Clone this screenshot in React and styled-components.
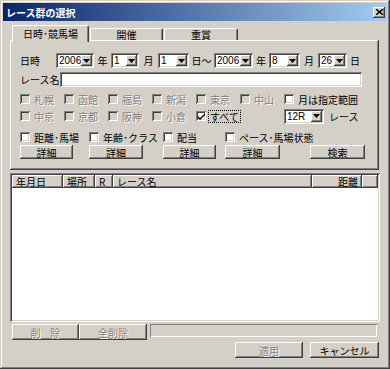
import React from 'react'
import styled, { createGlobalStyle, css } from 'styled-components'

const GlobalStyle = createGlobalStyle`
  html, body {
    margin: 0;
    padding: 0;
    background: #d4d0c8;
  }
  body {
    font-family: "Noto Sans CJK JP", "DejaVu Sans", sans-serif;
    font-size: 10px;
    color: #000;
  }
`

const raised = css`
  background: #d4d0c8;
  box-shadow: inset -1px -1px #404040, inset 1px 1px #fff, inset -2px -2px #808080, inset 2px 2px #d4d0c8;
`
const sunken = css`
  background: #fff;
  box-shadow: inset 1px 1px #808080, inset -1px -1px #fff, inset 2px 2px #404040, inset -2px -2px #d4d0c8;
`

const Window = styled.div`
  width: 390px;
  height: 369px;
  box-sizing: border-box;
  padding: 3px;
  background: #d4d0c8;
  box-shadow: inset -1px -1px #404040, inset 1px 1px #d4d0c8, inset -2px -2px #808080, inset 2px 2px #fff;
  display: flex;
  flex-direction: column;
`

const TitleBar = styled.div`
  height: 18px;
  flex-shrink: 0;
  background: linear-gradient(to right, #0a246a, #a6caf0);
  color: #fff;
  font-weight: bold;
  font-size: 10px;
  display: flex;
  align-items: center;
  justify-content: space-between;
  padding: 0 2px 0 3px;
`

const CloseButton = styled.div`
  ${raised};
  width: 12px;
  height: 11px;
  display: flex;
  align-items: center;
  justify-content: center;
`

const Content = styled.div`
  padding: 4px 8px 0 7px;
  display: flex;
  flex-direction: column;
`

const TabRow = styled.div`
  display: flex;
  align-items: flex-end;
  height: 15px;
  padding-left: 2px;
  position: relative;
  z-index: 1;
`

const Tab = styled.div`
  width: ${p => p.$w}px;
  height: ${p => (p.$active ? 17 : 12)}px;
  margin-bottom: ${p => (p.$active ? -2 : 0)}px;
  margin-left: ${p => (p.$active ? 0 : 1)}px;
  box-sizing: border-box;
  background: #d4d0c8;
  border-top: 1px solid #fff;
  border-left: 1px solid #fff;
  border-right: 1px solid #404040;
  box-shadow: inset -1px 0 #808080;
  border-radius: 2px 2px 0 0;
  display: flex;
  justify-content: center;
  padding-top: ${p => (p.$active ? 2 : 0)}px;
  line-height: 11px;
`

const Panel = styled.div`
  ${raised};
  height: 130px;
  box-sizing: border-box;
  padding: 13px 0 0 10px;
`

const Row = styled.div`
  display: flex;
  align-items: center;
  height: 15px;
  margin-bottom: ${p => p.$mb || 0}px;
`

const Label = styled.span`
  width: ${p => p.$w}px;
  flex-shrink: 0;
  text-align: ${p => p.$align || 'left'};
  padding-left: ${p => p.$pl || 0}px;
  white-space: nowrap;
`

const ComboBox = styled.div`
  ${sunken};
  width: ${p => p.$w}px;
  height: 15px;
  box-sizing: border-box;
  padding: 2px;
  display: flex;
  align-items: center;
  flex-shrink: 0;
`

const ComboText = styled.span`
  flex: 1;
  padding-left: 1px;
  font-family: "Liberation Sans", "Noto Sans CJK JP", sans-serif;
  font-size: 10px;
  line-height: 11px;
  white-space: nowrap;
`

const ComboButton = styled.div`
  ${raised};
  width: 11px;
  height: 11px;
  flex-shrink: 0;
  display: flex;
  align-items: center;
  justify-content: center;
`

const TextInput = styled.div`
  ${sunken};
  width: 302px;
  height: 15px;
`

const CheckGrid = styled.div`
  display: grid;
  grid-template-columns: repeat(6, 44px) auto;
  grid-template-rows: 14px 14px;
  row-gap: 3px;
  align-items: center;
  margin-bottom: 8px;
`

const OptionGrid = styled.div`
  display: grid;
  grid-template-columns: 69px 74px 62px 85px 55px;
  grid-template-rows: 12px 14px;
  row-gap: 2px;
  align-items: center;
`

const CheckWrap = styled.label`
  display: flex;
  align-items: center;
  gap: 3px;
  white-space: nowrap;
  color: ${p => (p.$disabled ? '#808080' : '#000')};
  text-shadow: ${p => (p.$disabled ? '1px 1px 0 #fff' : 'none')};
`

const Box = styled.span`
  ${sunken};
  background: ${p => (p.$disabled ? '#d4d0c8' : '#fff')};
  width: 10px;
  height: 10px;
  flex-shrink: 0;
  display: flex;
  align-items: center;
  justify-content: center;
`

const CheckText = styled.span`
  outline: ${p => (p.$focus ? '1px dotted #000' : 'none')};
  line-height: 11px;
  padding: 0 1px;
`

const Button = styled.div`
  width: ${p => p.$w}px;
  height: ${p => p.$h || 14}px;
  box-sizing: border-box;
  background: #d4d0c8;
  display: flex;
  align-items: center;
  justify-content: center;
  flex-shrink: 0;
  color: ${p => (p.$disabled ? '#808080' : '#000')};
  text-shadow: ${p => (p.$disabled ? '1px 1px 0 #fff' : 'none')};
  box-shadow: inset -1px -1px #404040, inset 1px 1px #fff, inset -2px -2px #808080, inset 2px 2px #d4d0c8;
`

const ListView = styled.div`
  ${sunken};
  height: 149px;
  margin-top: 3px;
  margin-right: -1px;
  padding: 2px;
  box-sizing: border-box;
`

const HeaderRow = styled.div`
  display: flex;
  height: 13px;
`

const HeaderCell = styled.div`
  ${raised};
  width: ${p => (p.$w ? `${p.$w}px` : 'auto')};
  flex: ${p => (p.$w ? '0 0 auto' : '1')};
  box-sizing: border-box;
  padding: 0 4px;
  line-height: 13px;
  text-align: ${p => p.$align || 'left'};
  white-space: nowrap;
`

const BottomRow = styled.div`
  display: flex;
  height: 16px;
  margin-top: 2px;
  padding-left: 2px;
`

const StatusField = styled.div`
  flex: 1;
  height: 13px;
  margin: 0 2px 0 3px;
  background: #d4d0c8;
  box-shadow: inset 1px 1px #808080, inset -1px -1px #fff;
`

const Footer = styled.div`
  display: flex;
  justify-content: flex-end;
  gap: 7px;
  margin-top: 2px;
`

const Arrow = () => (
  <svg width="7" height="4" viewBox="0 0 7 4">
    <path d="M0 0h7L3.5 4z" fill="#000" />
  </svg>
)

const Combo = ({ w, value }) => (
  <ComboBox $w={w}>
    <ComboText>{value}</ComboText>
    <ComboButton>
      <Arrow />
    </ComboButton>
  </ComboBox>
)

const Check = ({ label, disabled, checked, focus }) => (
  <CheckWrap $disabled={disabled}>
    <Box $disabled={disabled}>
      {checked && (
        <svg width="7" height="7" viewBox="0 0 7 7">
          <path d="M0 3l2 2 5-5v2l-5 5-2-2z" fill="#000" />
        </svg>
      )}
    </Box>
    <CheckText $focus={focus}>{label}</CheckText>
  </CheckWrap>
)

const courses1 = ['札幌', '函館', '福島', '新潟', '東京', '中山']
const courses2 = ['中京', '京都', '阪神', '小倉']

export default function App() {
  return (
    <>
      <GlobalStyle />
      <Window>
        <TitleBar>
          <span>レース群の選択</span>
          <CloseButton>
            <svg width="7" height="6" viewBox="0 0 7 6">
              <path d="M0 0l7 6M7 0L0 6" stroke="#000" strokeWidth="1.4" />
            </svg>
          </CloseButton>
        </TitleBar>
        <Content>
          <TabRow>
            <Tab $active $w={77}>日時･競馬場</Tab>
            <Tab $w={73}>開催</Tab>
            <Tab $w={74}>重賞</Tab>
          </TabRow>
          <Panel>
            <Row $mb={4}>
              <Label $w={36}>日時</Label>
              <Combo w={38} value="2006" />
              <Label $w={17} $align="center">年</Label>
              <Combo w={28} value="1" />
              <Label $w={19} $align="center">月</Label>
              <Combo w={31} value="1" />
              <Label $w={25} $align="center">日～</Label>
              <Combo w={39} value="2006" />
              <Label $w={16} $align="center">年</Label>
              <Combo w={31} value="8" />
              <Label $w={18} $align="center">月</Label>
              <Combo w={29} value="26" />
              <Label $w={16} $align="center">日</Label>
            </Row>
            <Row $mb={5}>
              <Label $w={40}>レース名</Label>
              <TextInput />
            </Row>
            <CheckGrid>
              {courses1.map(c => (
                <Check key={c} label={c} disabled />
              ))}
              <Check label="月は指定範囲" />
              {courses2.map(c => (
                <Check key={c} label={c} disabled />
              ))}
              <Check label="すべて" checked focus />
              <span />
              <Row>
                <Combo w={40} value="12R" />
                <Label $w={40} $pl={5}>レース</Label>
              </Row>
            </CheckGrid>
            <OptionGrid>
              <Check label="距離･馬場" />
              <Check label="年齢･クラス" />
              <Check label="配当" />
              <Check label="ペース･馬場状態" />
              <span />
              <Button $w={53}>詳細</Button>
              <Button $w={54}>詳細</Button>
              <Button $w={53}>詳細</Button>
              <Button $w={55}>詳細</Button>
              <Button $w={55}>検索</Button>
            </OptionGrid>
          </Panel>
          <ListView>
            <HeaderRow>
              <HeaderCell $w={51}>年月日</HeaderCell>
              <HeaderCell $w={32}>場所</HeaderCell>
              <HeaderCell $w={18}>R</HeaderCell>
              <HeaderCell $w={199}>レース名</HeaderCell>
              <HeaderCell $w={50} $align="right">距離</HeaderCell>
              <HeaderCell />
            </HeaderRow>
          </ListView>
          <BottomRow>
            <Button $w={67} $h={16} $disabled>削　除</Button>
            <Button $w={68} $h={16} $disabled>全削除</Button>
            <StatusField />
          </BottomRow>
          <Footer>
            <Button $w={68} $h={16} $disabled>適用</Button>
            <Button $w={69} $h={16}>キャンセル</Button>
          </Footer>
        </Content>
      </Window>
    </>
  )
}
